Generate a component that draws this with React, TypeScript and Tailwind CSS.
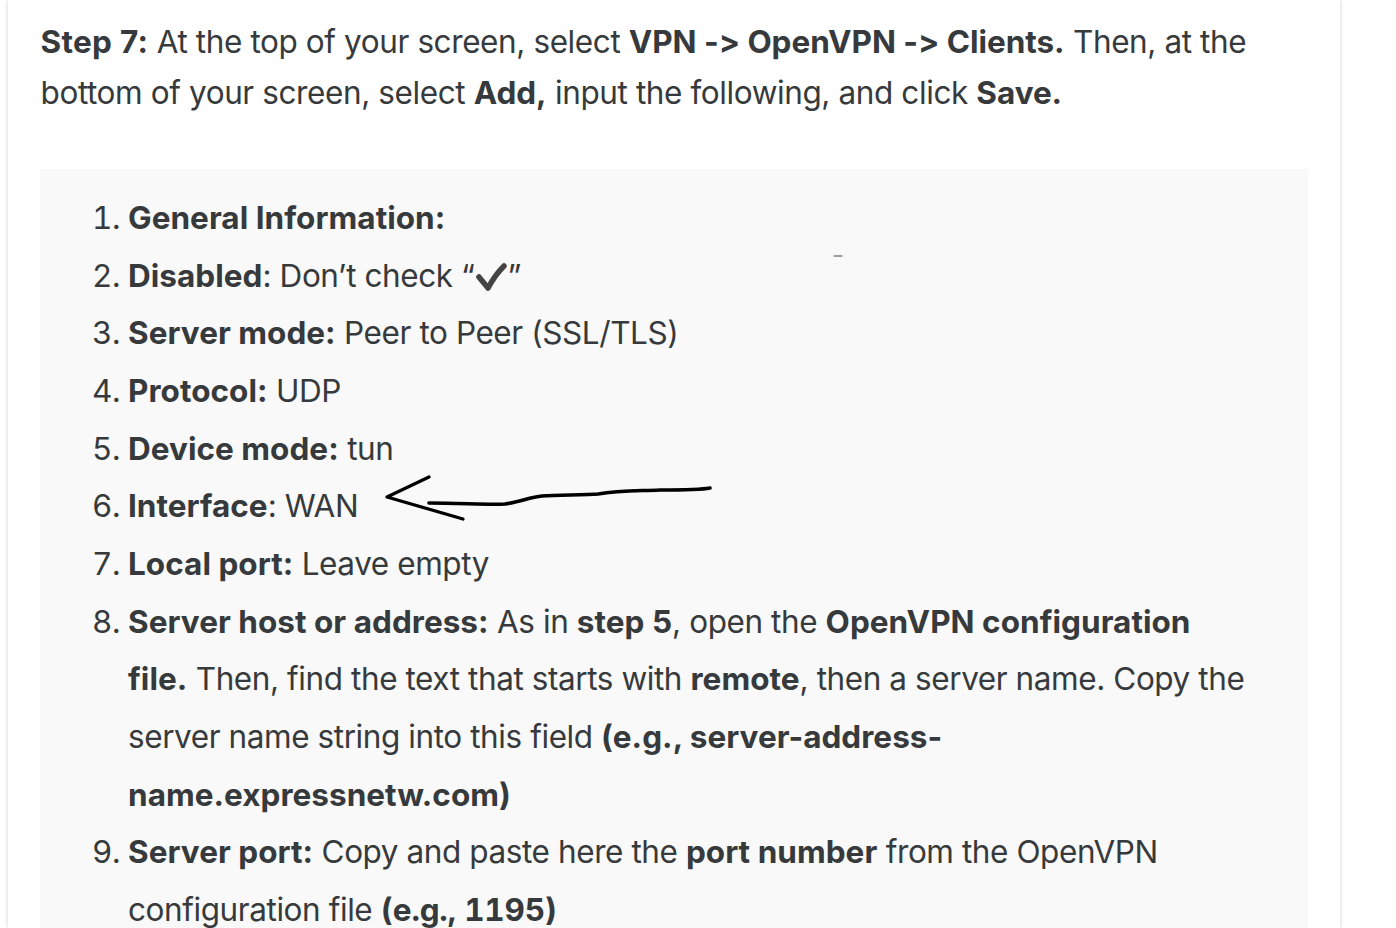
import type { ReactNode } from "react";

export default function App() {
  const items: ReactNode[] = [
    <><b>General Information:</b></>,
    <><b>Disabled</b>: Don’t check “<svg className="ml-[1px] inline-block h-[30px] w-[32px] align-[-6px]" viewBox="0 0 32 30" fill="none" stroke="#444" strokeWidth="5.5" strokeLinecap="round" strokeLinejoin="round"><path d="M3 14 L12 25 Q19 12 28 3" /></svg>”</>,
    <><b>Server mode:</b> Peer to Peer (SSL/TLS)</>,
    <><b>Protocol:</b> UDP</>,
    <><b>Device mode:</b> tun</>,
    <><b>Interface</b>: WAN</>,
    <><b>Local port:</b> Leave empty</>,
    <><b>Server host or address:</b> As in <b>step 5</b>, open the <b>OpenVPN configuration file.</b> Then, find the text that starts with <b>remote</b>, then a server name. Copy the server name string into this field <b>(e.g., server-address-name.expressnetw.com)</b></>,
    <><b>Server port:</b> Copy and paste here the <b>port number</b> from the OpenVPN configuration file <b><span className="tracking-[-0.2px] tabular-nums">(e.g., 1195)</span></b></>,
  ];
  return (
    <div className="h-[928px] w-[1396px] overflow-hidden bg-white font-['Inter',sans-serif] text-[31.5px] text-[#373a3c] [font-variant-ligatures:none]">
      <div className="relative ml-2 h-full w-[1332px] bg-white px-8 pt-4 shadow-[0_0_4px_rgba(0,0,0,0.2)]">
        <p className="m-0 pl-[0.5px] leading-[51px] tracking-[-0.4px] [&_b]:tracking-[-0.05px]">
          <b><span className="tracking-[0.3px]">Step 7:</span></b> At the top of your screen, select <b>VPN -&gt; OpenVPN -&gt; Clients.</b> Then, at the bottom of your screen, select <b>Add,</b> input the following, and click <b>Save.</b>
        </p>
        <div className="mt-[51px] bg-[#f9f9f9] pt-5 pr-[56px] pb-5 pl-[88px] leading-[57.65px] tracking-[-0.42px] [&_b]:tracking-[0.03px]">
          <ol className="list-decimal">
            {items.map((it, i) => <li key={i}>{it}</li>)}
          </ol>
        </div>
        <svg className="absolute top-0 left-[-8px] h-[928px] w-[1332px]" viewBox="0 0 1332 928" fill="none" stroke="#000" strokeLinecap="round" strokeLinejoin="round">
          <path d="M429 477 Q408 487 387 497 Q425 508 463 519" strokeWidth="3.2" />
          <path d="M429 503 C460 503 490 505 505 504 C520 502 530 497 542 496 C560 495 585 495 598 494 C620 490 640 491 660 490 C680 490 700 490 710 488" strokeWidth="3.6" />
          <path d="M834 256H842" strokeWidth="1" stroke="#444" />
        </svg>
      </div>
    </div>
  );
}
